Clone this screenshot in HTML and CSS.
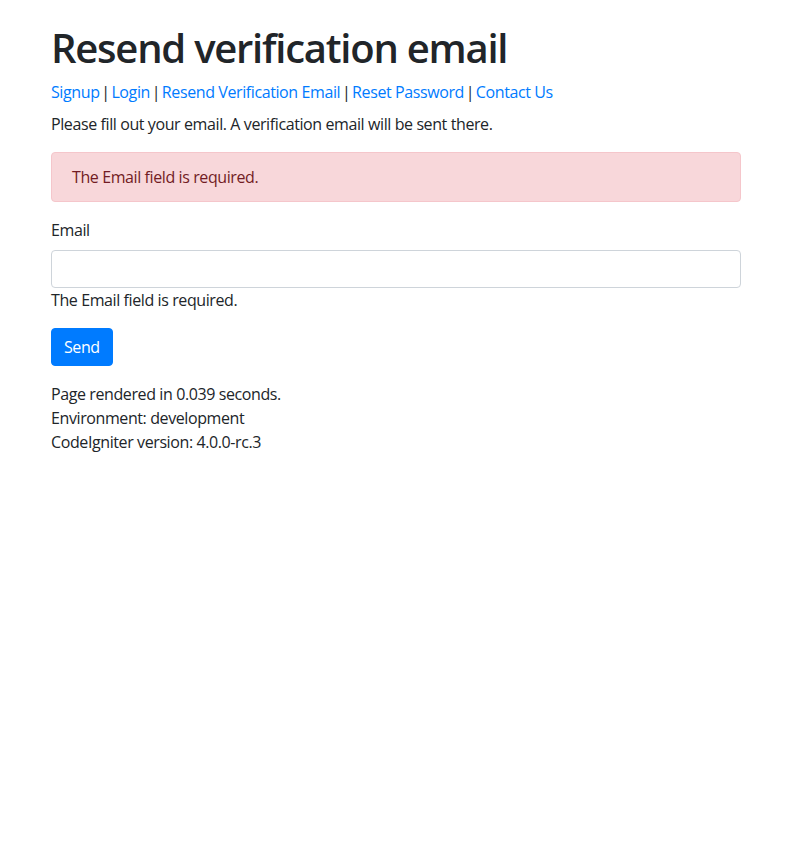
FILE: index.html
```html
<!DOCTYPE html>
<html lang="en">
<head>
<meta charset="utf-8">
<title>Resend verification email</title>
<link rel="stylesheet" href="styles.css">
</head>
<body>
<div class="container">
  <h1 class="title">Resend verification email</h1>
  <div class="nav-links">
    <a href="#">Signup</a> | <a href="#">Login</a> | <a href="#">Resend Verification Email</a> | <a href="#">Reset Password</a> | <a href="#">Contact Us</a>
  </div>
  <p class="lead-text">Please fill out your email. A verification email will be sent there.</p>
  <div class="alert">The Email field is required.</div>
  <form class="form">
    <div class="form-group">
      <label class="label" for="email">Email</label>
      <input class="input" type="text" id="email" name="email">
      <div class="field-error">The Email field is required.</div>
    </div>
    <button class="btn" type="button">Send</button>
  </form>
  <div class="footer">
    <div>Page rendered in 0.039 seconds.</div>
    <div>Environment: development</div>
    <div>CodeIgniter version: 4.0.0-rc.3</div>
  </div>
</div>
</body>
</html>
```

FILE: styles.css
```css
* { box-sizing: border-box; }
html, body {
  margin: 0;
  padding: 0;
  background: #fff;
}
body {
  font-family: "Open Sans", "Noto Sans", sans-serif;
  font-size: 16px;
  line-height: 24px;
  letter-spacing: -0.4px;
  color: #212529;
}
.container {
  max-width: 720px;
  margin: 0 auto;
  padding: 24px 15px 0;
}
.title {
  margin: 0 0 8px;
  font-size: 40px;
  line-height: 48px;
  font-weight: 600;
  letter-spacing: -1.24px;
}
.nav-links {
  margin-bottom: 8px;
  word-spacing: -2px;
}
.nav-links a {
  color: #007bff;
  text-decoration: none;
  word-spacing: 0;
}
.lead-text {
  margin: 0 0 16px;
}
.alert {
  background: #f8d7da;
  border: 1px solid #f5c6cb;
  color: #721c24;
  border-radius: 4px;
  padding: 12px 20px;
  margin-bottom: 16px;
}
.form { margin: 0; }
.form-group { margin-bottom: 16px; }
.label {
  display: block;
  margin-bottom: 8px;
}
.input {
  display: block;
  width: 100%;
  height: 38px;
  padding: 6px 12px;
  font: inherit;
  border: 1px solid #ced4da;
  border-radius: 4px;
  background: #fff;
}
.btn {
  display: block;
  font: inherit;
  letter-spacing: -0.4px;
  color: #fff;
  background: #007bff;
  border: 1px solid #007bff;
  border-radius: 4px;
  padding: 6px 12px;
  height: 38px;
}
.footer {
  margin-top: 16px;
}
```
